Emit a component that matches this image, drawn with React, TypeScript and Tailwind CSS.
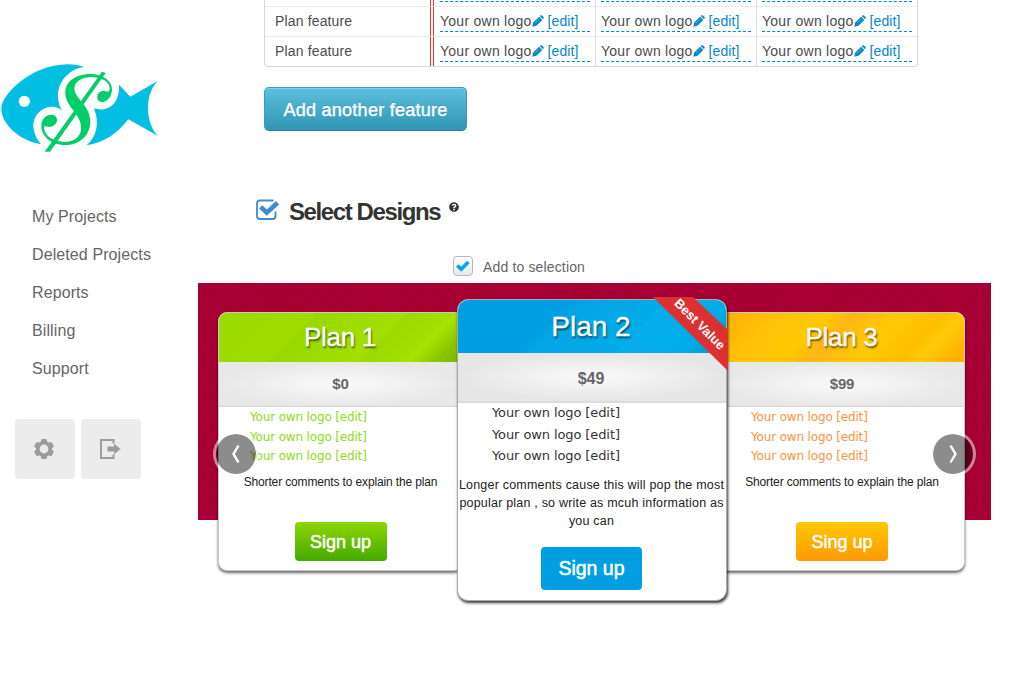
import React from "react";
import { FaQuestionCircle } from "react-icons/fa";

function FishLogo() {
  return (
    <svg width="170" height="105" viewBox="0 0 510 315" className="block">
      <g fill="#00bfe2">
        <path d="M4 160C6 125 55 73 120 45C165 27 215 22 252 36C205 42 171 83 174 128C175 145 180 158 188 169C174 154 153 151 132 161C106 174 97 199 101 222C104 241 112 255 123 268C55 256 3 205 4 160Z" />
        <path d="M357 89L391 125L474 77C436 112 432 199 474 243L385 193C351 237 310 264 260 271C291 245 299 202 282 160C324 174 361 144 357 89Z" />
      </g>
      <circle cx="73" cy="139" r="17" fill="#fff" />
      <g fill="#00ce68">
        <path d="M196 112C197 75 234 57 270 57L270 66C243 68 223 80 223 102C225 131 271 152 271 200C270 245 235 270 195 270L195 261C230 258 246 240 243 212C239 174 195 153 196 112Z" />
        <path d="M306 50L317 54L150 290L134 290Z" />
        <path d="M292 128C291 113 303 106 316 109C324 111 328 110 329 101C329 77 301 65 262 66L267 57C312 56 338 81 336 106C334 129 319 142 305 141C297 140 292 135 292 128Z" />
        <path d="M171 196C172 184 161 178 148 180C134 182 123 197 124 215C126 247 158 272 203 270L207 261C163 262 134 245 132 219C133 211 139 215 147 216C160 216 170 208 171 196Z" />
      </g>
    </svg>
  );
}

function GearIcon() {
  return (
    <svg width="20" height="22" viewBox="-10 -11 20 22">
      <g fill="#9c9c9c">
        {[0, 60, 120].map((a) => (
          <rect key={a} x="-3" y="-10" width="6" height="20" rx="1.6" transform={`rotate(${a})`} />
        ))}
        <circle r="8" />
      </g>
      <circle r="4.4" fill="#ececec" />
    </svg>
  );
}

function ExitIcon() {
  return (
    <svg width="22" height="22" viewBox="0 0 22 22">
      <path d="M14.5 5.5V2H2V20H14.5V16.5" fill="none" stroke="#9c9c9c" strokeWidth="2" />
      <path d="M8.5 8.4H15V5.4L21.5 11L15 16.6V13.6H8.5Z" fill="#9c9c9c" />
    </svg>
  );
}

function PencilIcon() {
  return (
    <svg width="12" height="12" viewBox="0 0 12 12" className="shrink-0">
      <path d="M0.3 11.7L1.2 7.6L7.1 1.7L10.3 4.9L4.4 10.8Z M7.8 1.1L8.7 0.3Q9.3 0 9.9 0.4L11.6 2.1Q12 2.7 11.6 3.3L10.9 4.2Z" fill="#0088cc" />
      <path d="M3 8.2L7.4 3.8" stroke="#fff" strokeWidth="0.5" opacity="0.7" />
    </svg>
  );
}

function Feature({ last, blank }: { last?: boolean; blank?: boolean }) {
  return (
    <div className={`flex shrink-0 pl-[5px] ${last ? "w-[160px]" : "w-[161px] border-r border-[#ddd]"}`}>
      <div className="mt-[4px] flex h-[21px] w-[150px] shrink-0 items-center whitespace-nowrap border-b border-dashed border-[#0088cc] text-[14px] leading-[20px] tracking-[0.26px] text-[#4c4c4c]">
        {!blank && (
          <>
            Your own logo
            <PencilIcon />
            <span className="ml-[4px] tracking-[0.1px] text-[#0088cc]">[edit]</span>
          </>
        )}
      </div>
    </div>
  );
}

function FeatureTable() {
  return (
    <div className="-mt-[23px] ml-[66px] h-[90px] w-[654px] shrink-0 overflow-hidden rounded-b-[4px] border border-t-0 border-[#d8d8d8]">
      {[0, 1, 2].map((i) => (
        <div key={i} className={`flex h-[30px] ${i < 2 ? "border-b border-[#e3edf3]" : ""}`}>
          <div className="w-[166px] shrink-0 border-r border-[#ee3333] pl-[10px] text-[14px] leading-[29px] tracking-[0.15px] text-[#4c4c4c]">
            {i > 0 && "Plan feature"}
          </div>
          <div className="mr-[1px] w-[3px] shrink-0 border-r border-[#ee3333]" />
          <Feature blank={i === 0} />
          <Feature blank={i === 0} />
          <Feature blank={i === 0} last />
        </div>
      ))}
    </div>
  );
}

type Plan = {
  title: string;
  price: string;
  comment: string;
  action: string;
  header: string;
  list: string;
  button: string;
};

const left: Plan = {
  title: "Plan 1",
  price: "$0",
  comment: "Shorter comments to explain the plan",
  action: "Sign up",
  header: "bg-[linear-gradient(135deg,#9adb00_0%,#a0dc00_33%,#98d800_34%,#a4e000_64%,#9bd900_65%,#a6e300_82%,#8ac400_91%,#7db500_100%)]",
  list: "text-[#8edc1c]",
  button: "bg-linear-to-b from-[#8bd600] to-[#45a900]",
};

const right: Plan = {
  title: "Plan 3",
  price: "$99",
  comment: "Shorter comments to explain the plan",
  action: "Sing up",
  header: "bg-[linear-gradient(135deg,#ffae00_0%,#ffc40a_24%,#ffc800_38%,#ffb515_46%,#ffc905_62%,#ffbf00_77%,#ffca0a_84%,#ffb000_96%)]",
  list: "text-[#ff9240]",
  button: "bg-linear-to-b from-[#ffc800] to-[#ff9800]",
};

function SideCard({ plan, className }: { plan: Plan; className: string }) {
  return (
    <div className={`mt-[29px] flex h-[259px] flex-col items-center overflow-hidden rounded-[9px] border border-[#c9c9c9] bg-white shadow-[0_2px_3px_rgba(0,0,0,0.6)] ${className}`}>
      <div className={`h-[49px] w-full shrink-0 pr-[1px] text-center text-[26px] leading-[49px] tracking-[-0.3px] text-white [-webkit-text-stroke:0.3px_white] [text-shadow:1px_2px_2px_rgba(0,0,0,0.6)] ${plan.header}`}>
        {plan.title}
      </div>
      <div className="h-[45px] w-full shrink-0 border-b border-[#d2d2d2] bg-[radial-gradient(ellipse_at_center,#fafafa_0%,#e8e8e8_70%)] text-center text-[15px] font-bold leading-[44px] tracking-[-0.2px] text-[#666]">
        {plan.price}
      </div>
      <div className={`w-full pl-[31px] pt-[1px] font-['DejaVu_Sans',sans-serif] text-[12px] leading-[19.5px] tracking-[-0.16px] ${plan.list}`}>
        <p>Your own logo [edit]</p>
        <p>Your own logo [edit]</p>
        <p>Your own logo [edit]</p>
      </div>
      <p className="mt-[6px] whitespace-nowrap text-[12px] leading-[18px] tracking-[-0.14px] text-[#222]">{plan.comment}</p>
      <button className={`mt-[31px] h-[39px] w-[92px] shrink-0 rounded-[4px] pt-[2px] text-[18px] text-white [-webkit-text-stroke:0.5px_white] ${plan.button}`}>
        {plan.action}
      </button>
    </div>
  );
}

function FeaturedCard() {
  return (
    <div className="relative z-10 mt-[16px] h-[302px] w-[270px] shrink-0 rounded-[11px] border border-[#aaa] bg-white shadow-[1px_2px_3px_rgba(0,0,0,0.8)]">
      <div className="flex h-full flex-col items-center overflow-hidden rounded-[10px]">
        <div className="h-[53px] w-full shrink-0 bg-[linear-gradient(135deg,#009fe3_0%,#009ee2_34%,#04a5e6_40%,#00ade8_65%,#06aeea_66%,#00ade8_86%,#008fc6_100%)] pr-[2px] text-center text-[28px] leading-[53px] text-white [-webkit-text-stroke:0.3px_white] [text-shadow:1px_2px_2px_rgba(0,0,0,0.6)]">
          Plan 2
        </div>
        <div className="h-[50px] w-full shrink-0 border-b-2 border-[#dcdcdc] bg-[radial-gradient(ellipse_at_center,#fafafa_0%,#e6e6e6_70%)] pr-[2px] text-center text-[16px] font-bold leading-[52px] text-[#666]">
          $49
        </div>
        <div className="-mt-[1px] w-full pl-[34px] font-['DejaVu_Sans',sans-serif] text-[13px] leading-[21.5px] tracking-[-0.1px] text-[#333]">
          <p>Your own logo [edit]</p>
          <p>Your own logo [edit]</p>
          <p>Your own logo [edit]</p>
        </div>
        <div className="mt-[9px] whitespace-nowrap pr-[1px] text-center text-[12.5px] leading-[18px] tracking-[0.2px] text-[#222]">
          <p>Longer comments cause this will pop the most</p>
          <p>popular plan , so write as mcuh information as</p>
          <p>you can</p>
        </div>
        <button className="mr-[1px] mt-[17px] h-[43px] w-[101px] shrink-0 rounded-[4px] bg-[#009fe2] pt-[2px] text-[19.5px] text-white [-webkit-text-stroke:0.5px_white]">
          Sign up
        </button>
      </div>
      <div className="absolute -right-[2px] -top-[3px] size-[75px] overflow-hidden">
        <svg width="75" height="75" viewBox="0 0 75 75" className="block">
          <path d="M0 0H40L75 33V74Z" fill="#dc3131" />
          <text x="46.5" y="31.5" transform="rotate(45 46.5 27.5)" textAnchor="middle" fontSize="13" fontWeight="700" fill="#fff" fontFamily="Liberation Sans">
            Best Value
          </text>
        </svg>
      </div>
    </div>
  );
}

function Arrow({ flip, className }: { flip?: boolean; className: string }) {
  return (
    <button className={`absolute top-[148px] z-20 flex size-[46px] items-center justify-center rounded-full border-[3px] border-white/50 bg-black/45 bg-clip-padding ${className}`}>
      <svg width="10" height="20" viewBox="0 0 10 20" className={flip ? "-scale-x-100" : ""}>
        <path d="M7.5 1.5L2.5 10L7.5 18.5" fill="none" stroke="#fff" strokeWidth="2.4" />
      </svg>
    </button>
  );
}

export default function App() {
  return (
    <div className="flex h-[698px] w-[1023px] overflow-hidden bg-white font-['Liberation_Sans',Arial,sans-serif]">
      <aside className="w-[198px] shrink-0 pt-[55px]">
        <FishLogo />
        <nav className="mt-[38px] flex flex-col pl-[32px] text-[16px] leading-[38px] tracking-[0.1px] text-[#666]">
          <a>My Projects</a>
          <a>Deleted Projects</a>
          <a>Reports</a>
          <a>Billing</a>
          <a>Support</a>
        </nav>
        <div className="mt-[31px] flex gap-[6px] pl-[15px]">
          <button className="flex size-[60px] items-center justify-center rounded-[4px] bg-[#ececec]">
            <span className="-ml-[2px]"><GearIcon /></span>
          </button>
          <button className="flex size-[60px] items-center justify-center rounded-[4px] bg-[#ececec]">
            <span className="-ml-[2px]"><ExitIcon /></span>
          </button>
        </div>
      </aside>

      <main className="flex flex-1 flex-col">
        <FeatureTable />
        <button className="ml-[66px] mt-[20px] h-[44px] w-[203px] shrink-0 rounded-[5px] border border-[#3f9ab5] border-b-[#2a7e98] bg-linear-to-b from-[#5bc0de] to-[#2f96b4] pt-[2px] text-[18px] tracking-[0.25px] text-white shadow-[inset_0_1px_0_rgba(255,255,255,0.25)] [-webkit-text-stroke:0.4px_white] [text-shadow:0_-1px_0_rgba(0,0,0,0.25)]">
          Add another feature
        </button>

        <div className="mt-[66px] flex h-[30px] shrink-0 pl-[57px]">
          <svg width="26" height="24" viewBox="0 0 26 24" className="mt-[1px] shrink-0">
            <path d="M18.5 2.7Q17.8 2.5 17 2.5H5Q2 2.5 2 5.5V18Q2 21 5 21H17.5Q20.5 21 20.5 18V13.5" fill="none" stroke="#3d8bd0" strokeWidth="1.8" />
            <path d="M5.6 8.8L11.8 14.7L22.6 4.7" fill="none" stroke="#3d8bd0" strokeWidth="4.6" />
          </svg>
          <h2 className="ml-[8px] w-[150px] whitespace-nowrap text-[24px] font-bold leading-[30px] tracking-[-1.4px] text-[#333]">Select Designs</h2>
          <FaQuestionCircle className="ml-[10px] mt-[5px] size-[10px] shrink-0 text-[#333]" />
        </div>

        <div className="mt-[29px] flex h-[20px] shrink-0 items-center pl-[255px] text-[14px] tracking-[0.15px] text-[#666]">
          <span className="mr-[10px] flex size-[20px] items-center justify-center rounded-[4px] border border-[#b8b8b8] bg-linear-to-b from-white to-[#e8e8e8]">
            <svg width="16" height="14" viewBox="0 0 16 14">
              <path d="M2.3 6.5L6.2 10.3L13.4 3" fill="none" stroke="#08a4ef" strokeWidth="3.6" />
            </svg>
          </span>
          <span className="pt-[2px]">Add to selection</span>
        </div>

        <section className="relative mt-[7px] flex h-[237px] w-[793px] shrink-0 items-start bg-[#ab0034] bg-[repeating-linear-gradient(45deg,rgba(70,0,35,0.07)_0_1px,transparent_1px_3px),repeating-linear-gradient(-45deg,rgba(70,0,35,0.07)_0_1px,transparent_1px_3px)] pl-[20px]">
          <SideCard plan={left} className="-mr-[6px] w-[245px] shrink-0" />
          <FeaturedCard />
          <SideCard plan={right} className="-ml-[8px] w-[246px] shrink-0" />
          <Arrow className="left-[15px]" />
          <Arrow flip className="left-[732px]" />
        </section>
      </main>
    </div>
  );
}
